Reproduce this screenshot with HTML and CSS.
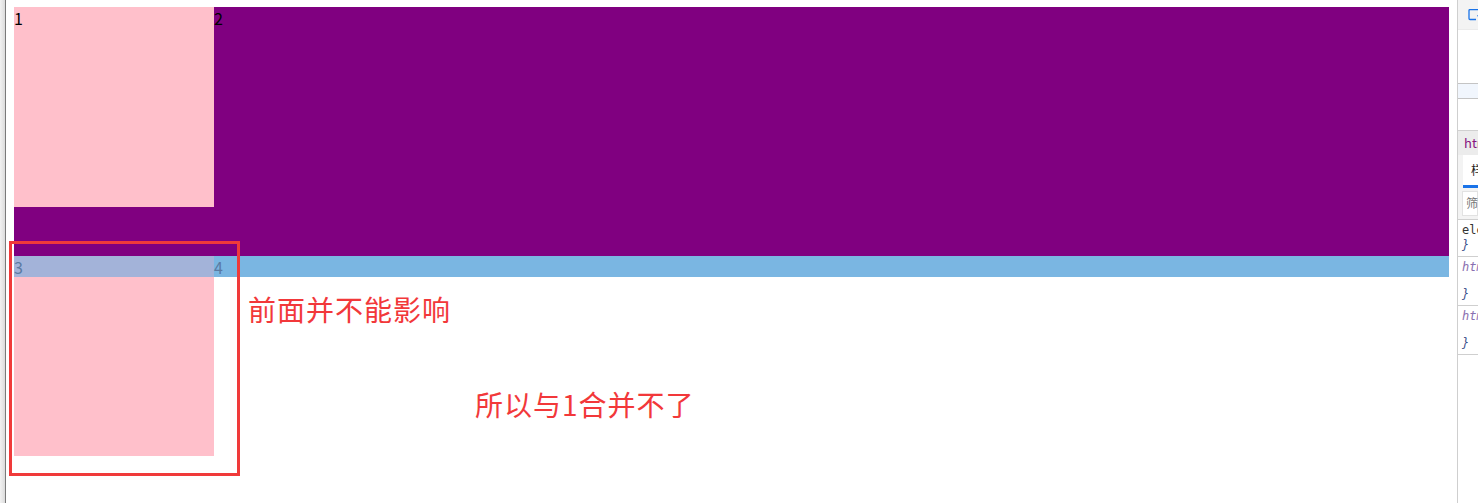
FILE: index.html
```html
<!DOCTYPE html>
<html lang="zh">
<head>
<meta charset="utf-8">
<title>float demo</title>
<link rel="stylesheet" href="styles.css">
</head>
<body>
<div class="screen">
  <div class="edge"></div>
  <main class="page">
    <div class="purple">
      <div class="box">1</div>
      <span class="label">2</span>
    </div>
    <div class="bar">
      <div class="bar-over">3</div>
      <div class="bar-rest">4</div>
    </div>
    <div class="box box-low"></div>
    <div class="mark"></div>
    <p class="note note-a">前面并不能影响</p>
    <p class="note note-b">所以与1合并不了</p>
  </main>
  <aside class="devtools">
    <div class="dt-top">
      <svg class="dt-icon" width="16" height="12" viewBox="0 0 16 12"><path d="M8 10.5H2a1 1 0 0 1-1-1v-8a1 1 0 0 1 1-1h11a1 1 0 0 1 1 1V5" fill="none" stroke="#1a73e8" stroke-width="1.3"/><path d="M9 6l6 2.2-2.5.8-.8 2.6z" fill="#1a73e8"/></svg>
    </div>
    <div class="dt-blank dt-b1"></div>
    <div class="dt-sel"></div>
    <div class="dt-blank dt-b2"></div>
    <div class="dt-crumb">html</div>
    <div class="dt-tabs"><span class="dt-tab">样式</span></div>
    <div class="dt-filter"><span class="dt-input">筛选器</span></div>
    <div class="dt-rule"><div class="mono">element.style {</div><div class="mono brace">}</div></div>
    <div class="dt-rule dt-tall"><div class="mono sel">html {</div><div class="mono brace">}</div></div>
    <div class="dt-rule dt-tall"><div class="mono sel">html {</div><div class="mono brace">}</div></div>
    <div class="dt-rest"></div>
  </aside>
</div>
</body>
</html>
```

FILE: styles.css
```css
* { box-sizing: border-box; }
html, body { margin: 0; padding: 0; background: #fff; }
body { font-family: "Noto Sans CJK SC", "Noto Sans", sans-serif; }

.screen {
  display: flex;
  width: 1478px;
  height: 503px;
  overflow: hidden;
}

.edge {
  width: 6px;
  flex: none;
  background: linear-gradient(to right, #f2f2f2, #dcdcdc);
  border-right: 1px solid #7a7a7a;
}

.page {
  position: relative;
  flex: 1;
  padding: 7px 8px 0 8px;
  font-size: 16px;
  line-height: 21px;
}

.purple {
  display: flex;
  align-items: flex-start;
  height: 249px;
  background: #800080;
  color: #000;
}
.box {
  width: 200px;
  height: 200px;
  background: #ffc0cb;
  flex: none;
  padding-top: 1px;
}
.label { color: #000; padding-top: 1px; }

.bar {
  display: flex;
  height: 21px;
  color: #5a7aa2;
}
.bar-over { width: 200px; flex: none; background: #a3b3d9; padding-top: 1px; }
.bar-rest { flex: 1; background: #7ab6e2; padding-top: 1px; }

.box-low { height: 179px; padding: 0; }

.mark {
  position: absolute;
  left: 3px;
  top: 241px;
  width: 231px;
  height: 235px;
  border: 3px solid #f03a3a;
}

.note {
  position: absolute;
  margin: 0;
  color: #f2383a;
  font-size: 28px;
  line-height: 36px;
  white-space: nowrap;
}
.note-a { left: 242px; top: 291px; letter-spacing: 1px; }
.note-b { left: 469px; top: 386px; letter-spacing: 1px; }

.devtools {
  width: 21px;
  flex: none;
  display: flex;
  flex-direction: column;
  overflow: hidden;
  border-left: 1px solid #cfcfcf;
  font-size: 12px;
  white-space: nowrap;
}
.dt-top {
  height: 30px;
  background: #f3f3f3;
  border-bottom: 1px solid #ebebeb;
  padding: 9px 0 0 10px;
}
.dt-icon { display: block; }
.dt-blank { background: #fff; }
.dt-b1 { height: 53px; }
.dt-sel {
  height: 16px;
  background: #f1f6fd;
  border-top: 1px solid #c4c4c4;
  border-bottom: 1px solid #c4c4c4;
}
.dt-b2 { height: 31px; }
.dt-crumb {
  height: 25px;
  background: #ececec;
  border-top: 1px solid #d0d0d0;
  color: #881280;
  padding: 3px 0 0 6px;
  font-size: 13px;
  line-height: 18px;
}
.dt-tabs {
  height: 33px;
  background: #f3f3f3;
  padding: 0 0 0 5px;
}
.dt-tab {
  display: block;
  height: 33px;
  background: #fff;
  border-bottom: 3px solid #1a73e8;
  padding: 6px 0 0 8px;
  color: #222;
  line-height: 18px;
}
.dt-filter {
  height: 32px;
  background: #f3f3f3;
  border-bottom: 1px solid #cfcfcf;
  padding: 3px 0 3px 4px;
}
.dt-input {
  display: block;
  height: 25px;
  background: #fff;
  border: 1px solid #e2e2e2;
  padding: 2px 0 0 3px;
  color: #777;
  line-height: 18px;
}
.dt-rule {
  height: 37px;
  border-bottom: 1px solid #cfcfcf;
  padding: 3px 0 0 4px;
}
.dt-tall { height: 49px; }
.dt-tall .brace { margin-top: 12px; }
.mono {
  font-family: "DejaVu Sans Mono", "Liberation Mono", monospace;
  font-size: 12px;
  line-height: 15px;
  color: #333;
}
.sel { font-style: italic; color: #8a6fb0; }
.brace { color: #3d4f8a; font-style: italic; }
.dt-rest { flex: 1; margin-bottom: 7px; }
```
